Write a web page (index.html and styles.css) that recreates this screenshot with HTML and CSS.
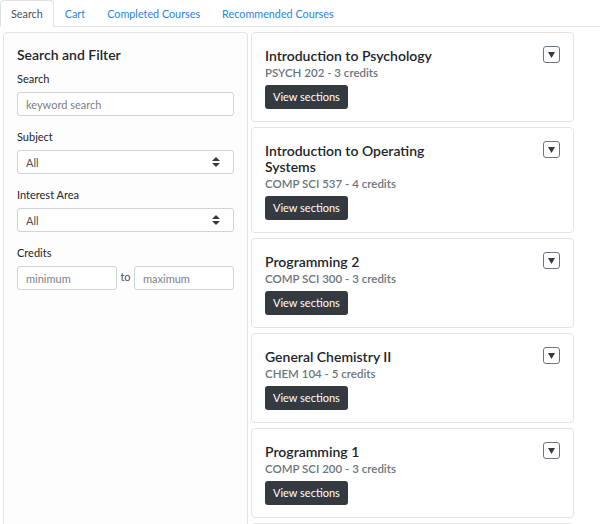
FILE: index.html
```html
<!DOCTYPE html>
<html lang="en">
<head>
<meta charset="utf-8">
<title>Course Search</title>
<link rel="stylesheet" href="styles.css">
</head>
<body>
<ul class="tabs">
  <li class="tab active">Search</li>
  <li class="tab">Cart</li>
  <li class="tab">Completed Courses</li>
  <li class="tab">Recommended Courses</li>
</ul>
<div class="main">
  <aside class="panel">
    <h2 class="panel-title">Search and Filter</h2>
    <label class="label">Search</label>
    <input class="field" type="text" placeholder="keyword search">
    <label class="label">Subject</label>
    <div class="select-wrap">
      <select class="field select"><option>All</option></select>
      <svg class="select-arrow" width="8" height="10" viewBox="0 0 8 10"><polygon points="4,0 8,4 0,4" fill="#343a40"/><polygon points="0,6 8,6 4,10" fill="#343a40"/></svg>
    </div>
    <label class="label">Interest Area</label>
    <div class="select-wrap">
      <select class="field select"><option>All</option></select>
      <svg class="select-arrow" width="8" height="10" viewBox="0 0 8 10"><polygon points="4,0 8,4 0,4" fill="#343a40"/><polygon points="0,6 8,6 4,10" fill="#343a40"/></svg>
    </div>
    <label class="label">Credits</label>
    <div class="range">
      <input class="field" type="text" placeholder="minimum">
      <span class="to">to</span>
      <input class="field" type="text" placeholder="maximum">
    </div>
  </aside>
  <section class="courses">
    <div class="card">
      <div class="card-info">
        <h3 class="card-title">Introduction to Psychology</h3>
        <div class="card-sub">PSYCH 202 - 3 credits</div>
        <button class="btn">View sections</button>
      </div>
      <button class="toggle"><svg width="7" height="6" viewBox="0 0 7 6"><polygon points="0,0 7,0 3.5,6" fill="#343a40"/></svg></button>
    </div>
    <div class="card">
      <div class="card-info">
        <h3 class="card-title">Introduction to Operating Systems</h3>
        <div class="card-sub">COMP SCI 537 - 4 credits</div>
        <button class="btn">View sections</button>
      </div>
      <button class="toggle"><svg width="7" height="6" viewBox="0 0 7 6"><polygon points="0,0 7,0 3.5,6" fill="#343a40"/></svg></button>
    </div>
    <div class="card">
      <div class="card-info">
        <h3 class="card-title">Programming 2</h3>
        <div class="card-sub">COMP SCI 300 - 3 credits</div>
        <button class="btn">View sections</button>
      </div>
      <button class="toggle"><svg width="7" height="6" viewBox="0 0 7 6"><polygon points="0,0 7,0 3.5,6" fill="#343a40"/></svg></button>
    </div>
    <div class="card">
      <div class="card-info">
        <h3 class="card-title">General Chemistry II</h3>
        <div class="card-sub">CHEM 104 - 5 credits</div>
        <button class="btn">View sections</button>
      </div>
      <button class="toggle"><svg width="7" height="6" viewBox="0 0 7 6"><polygon points="0,0 7,0 3.5,6" fill="#343a40"/></svg></button>
    </div>
    <div class="card">
      <div class="card-info">
        <h3 class="card-title">Programming 1</h3>
        <div class="card-sub">COMP SCI 200 - 3 credits</div>
        <button class="btn">View sections</button>
      </div>
      <button class="toggle"><svg width="7" height="6" viewBox="0 0 7 6"><polygon points="0,0 7,0 3.5,6" fill="#343a40"/></svg></button>
    </div>
    <div class="card">
      <div class="card-info">
        <h3 class="card-title">Data Structures</h3>
        <div class="card-sub">COMP SCI 400 - 3 credits</div>
        <button class="btn">View sections</button>
      </div>
      <button class="toggle"><svg width="7" height="6" viewBox="0 0 7 6"><polygon points="0,0 7,0 3.5,6" fill="#343a40"/></svg></button>
    </div>
  </section>
</div>
</body>
</html>
```
FILE: styles.css
```css
* { box-sizing: border-box; }
html, body { margin: 0; padding: 0; background: #fff; }
body {
  font-family: Lato, "Noto Sans", sans-serif;
  color: #212529;
  font-size: 11px;
}
.tabs {
  list-style: none;
  margin: 0;
  padding: 0;
  display: flex;
  border-bottom: 1px solid #dee2e6;
  height: 27px;
}
.tab {
  height: 27px;
  line-height: 25px;
  padding: 0 10px;
  color: #2a82e0;
  font-size: 10.8px;
  border: 1px solid transparent;
  border-bottom: none;
  border-radius: 4px 4px 0 0;
}
.tab.active {
  color: #495057;
  background: #fff;
  border-color: #dee2e6;
}
.main {
  display: grid;
  grid-template-columns: 245px 323px;
  column-gap: 3px;
  padding: 5px 0 0 3px;
  align-items: stretch;
}
.panel {
  border: 1px solid #e2e3e5;
  border-radius: 4px;
  padding: 13px 13px;
  display: flex;
  flex-direction: column;
  background: #fdfdfe;
}
.panel-title {
  margin: 0 0 6px;
  font-size: 14px;
  font-weight: 600;
  line-height: 18px;
}
.label {
  display: block;
  line-height: 16px;
  margin: 0 0 5px;
  font-size: 11px;
  padding-top: 1px;
}
.field {
  display: block;
  width: 100%;
  height: 24px;
  border: 1px solid #ced4da;
  border-radius: 3px;
  padding: 0 8px;
  font-family: inherit;
  font-size: 11px;
  color: #495057;
  background: #fff;
  margin: 0 0 12px;
  outline: none;
}
.field::placeholder { color: #7b8086; }
.select-wrap { position: relative; }
.select {
  -webkit-appearance: none;
  appearance: none;
  color: #495057;
}
.select-arrow {
  position: absolute;
  right: 14px;
  top: 7px;
}
.range {
  display: flex;
  align-items: flex-start;
}
.range .field { width: 100px; margin: 0; }
.to {
  width: 17px;
  text-align: center;
  line-height: 22px;
  color: #495057;
}
.courses {
  display: flex;
  flex-direction: column;
  gap: 5px;
}
.card {
  border: 1px solid #e2e3e5;
  border-radius: 4px;
  padding: 13px 13px 12px;
  display: flex;
  justify-content: space-between;
  align-items: flex-start;
  background: #fff;
}
.card-info { width: 192px; }
.card-title {
  margin: 0;
  font-size: 14px;
  font-weight: 600;
  line-height: 16px;
  padding-top: 2px;
}
.card-sub {
  color: #6c757d;
  font-size: 11.5px;
  font-weight: 600;
  line-height: 17px;
  margin-bottom: 4px;
}
.btn {
  display: block;
  height: 24px;
  padding: 0 8px;
  background: #343a40;
  color: #fff;
  border: none;
  border-radius: 3px;
  font-family: inherit;
  font-size: 11px;
  line-height: 24px;
}
.toggle {
  width: 17px;
  height: 17px;
  padding: 0;
  border: 1px solid #6c757d;
  border-radius: 3px;
  background: #fff;
  display: flex;
  align-items: center;
  justify-content: center;
}
.toggle svg { display: block; }
```
